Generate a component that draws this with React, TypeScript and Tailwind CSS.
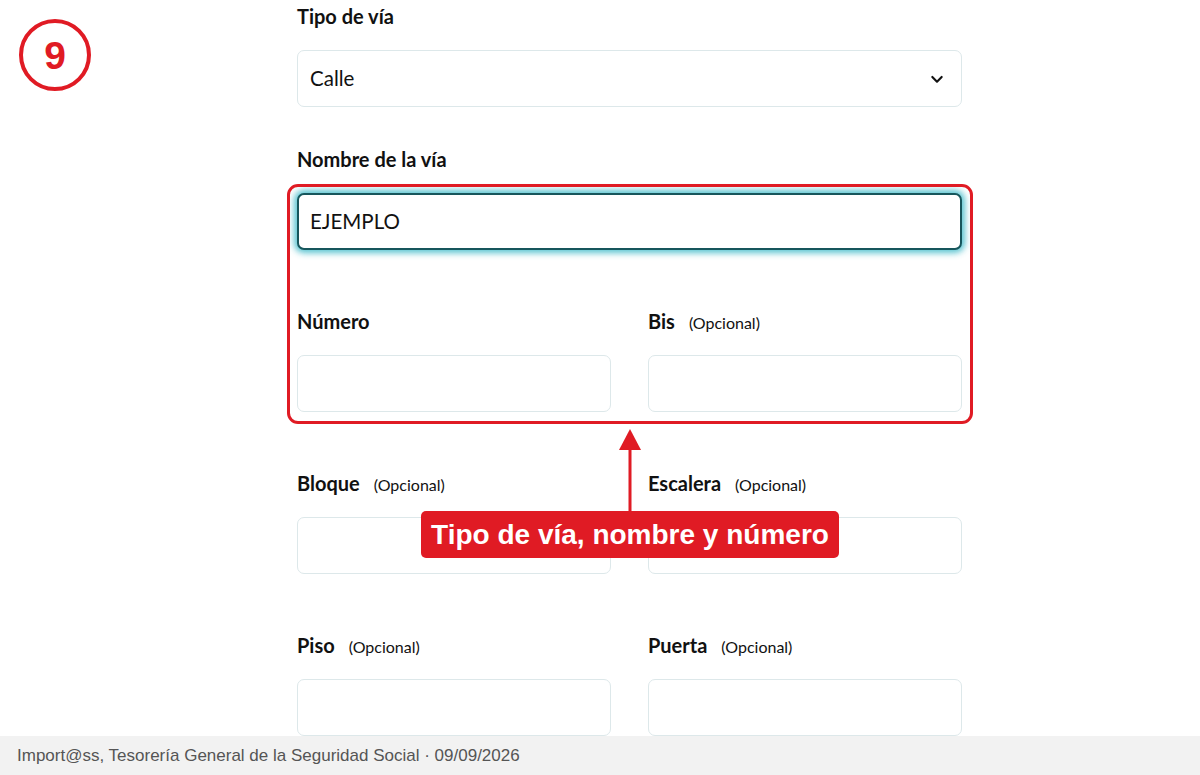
import React from 'react';

const lato = { fontFamily: 'Lato, "Noto Sans", sans-serif' };

interface FieldProps {
  label: string;
  optional?: boolean;
  value?: string;
  focused?: boolean;
  select?: boolean;
}

const Field = ({ label, optional, value, focused, select }: FieldProps) => {
  return (
    <div className="flex flex-col">
      <div className="flex items-baseline h-6 mb-[25px]">
        <span className="text-[20px] font-bold text-[#111]">{label}</span>
        {optional && <span className="ml-[14px] text-[16px] text-[#111]">(Opcional)</span>}
      </div>
      <div
        className={
          focused
            ? 'h-[57px] rounded-[7px] border-2 border-[#17565c] bg-white flex items-center px-[11px] shadow-[0_0_6px_3px_rgba(60,185,200,0.85)]'
            : 'h-[57px] rounded-[7px] border border-[#dde8ea] bg-white flex items-center px-[12px]'
        }
      >
        <span className="text-[20.5px] text-[#111] flex-1">{value}</span>
        {select && (
          <svg width="16" height="16" viewBox="0 0 24 24" fill="none" stroke="#111" strokeWidth="3.2" strokeLinecap="round" strokeLinejoin="round" className="mr-[4px]">
            <path d="M5 9l7 7 7-7" />
          </svg>
        )}
      </div>
    </div>
  );
};

const App = () => {
  return (
    <div className="relative w-[1200px] h-[775px] bg-white overflow-hidden" style={lato}>
      {/* step badge */}
      <div className="absolute left-[19px] top-[19px] w-[72px] h-[72px] rounded-full border-[4px] border-[#e01b24] flex items-center justify-center">
        <span className="text-[39px] font-bold text-[#e01b24] leading-none" style={{ fontFamily: '"Liberation Sans", Arial, sans-serif' }}>9</span>
      </div>

      <div className="ml-[297px] w-[665px] pt-[1px] flex flex-col gap-[37px]">
        <Field label="Tipo de vía" value="Calle" select />
        <Field label="Nombre de la vía" value="EJEMPLO" focused />
        <div className="mt-[19px] grid grid-cols-2 gap-x-[37px] gap-y-[56px]">
          <Field label="Número" />
          <Field label="Bis" optional />
          <Field label="Bloque" optional />
          <Field label="Escalera" optional />
          <Field label="Piso" optional />
          <Field label="Puerta" optional />
        </div>
      </div>

      {/* annotation */}
      <div className="absolute left-[287px] top-[184px] w-[686px] h-[240px] rounded-[11px] border-[3px] border-[#e01b24]" />
      <svg className="absolute left-[617px] top-[428px]" width="26" height="86" viewBox="0 0 26 86">
        <polygon points="13,1 24,22 2,22" fill="#e01b24" />
        <rect x="11.5" y="20" width="3" height="66" fill="#e01b24" />
      </svg>
      <div className="absolute left-[421px] top-[511px] w-[418px] h-[47px] rounded-[5px] bg-[#e01b24] flex items-center justify-center">
        <span className="text-white text-[28px] font-bold whitespace-nowrap" style={{ fontFamily: '"Liberation Sans", Arial, sans-serif' }}>
          Tipo de vía, nombre y número
        </span>
      </div>

      {/* footer */}
      <div className="absolute left-0 right-0 bottom-0 h-[39px] bg-[#f2f2f2] flex items-center px-[17px]">
        <span className="text-[17px] text-[#555]" style={{ fontFamily: '"Liberation Sans", Arial, sans-serif' }}>
          Import@ss, Tesorería General de la Seguridad Social · 09/09/2026
        </span>
      </div>
    </div>
  );
};

export default App;
